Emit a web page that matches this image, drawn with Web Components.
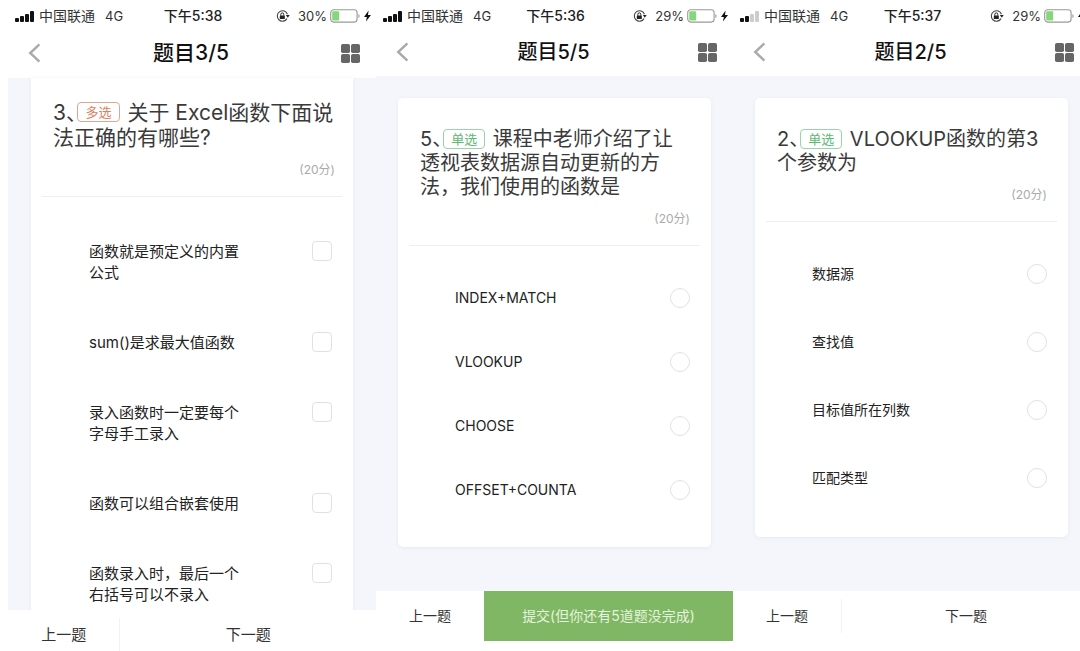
<!DOCTYPE html>
<html lang="zh-CN">
<head>
<meta charset="utf-8">
<meta name="viewport" content="width=device-width, initial-scale=1">
<title>题目</title>
<style>
  html, body { margin: 0; background: #fff; }
  body {
    font-family: Inter, "Noto Sans CJK SC", sans-serif;
    color: #333;
    height: 100vh;
    overflow: hidden;
  }
</style>
</head>
<body>

<quiz-board>
  <quiz-phone class="large">
    <status-bar slot="status" time="下午5:38" charge="30" signal="4"></status-bar>
    <nav-bar slot="nav">题目3/5</nav-bar>
    <quiz-card class="scrolled" number="3" kind="多选">
      <span slot="question">关于 Excel函数下面说法正确的有哪些?</span>
      <quiz-option type="checkbox">函数就是预定义的内置公式</quiz-option>
      <quiz-option type="checkbox">sum()是求最大值函数</quiz-option>
      <quiz-option type="checkbox">录入函数时一定要每个字母手工录入</quiz-option>
      <quiz-option type="checkbox">函数可以组合嵌套使用</quiz-option>
      <quiz-option type="checkbox">函数录入时，最后一个右括号可以不录入</quiz-option>
    </quiz-card>
    <pager-bar slot="pager">下一题</pager-bar>
  </quiz-phone>

  <quiz-phone>
    <status-bar slot="status" time="下午5:36" charge="29" signal="4"></status-bar>
    <nav-bar slot="nav">题目5/5</nav-bar>
    <quiz-card number="5" kind="单选">
      <span slot="question">课程中老师介绍了让透视表数据源自动更新的方法，我们使用的函数是</span>
      <quiz-option type="radio">INDEX+MATCH</quiz-option>
      <quiz-option type="radio">VLOOKUP</quiz-option>
      <quiz-option type="radio">CHOOSE</quiz-option>
      <quiz-option type="radio">OFFSET+COUNTA</quiz-option>
    </quiz-card>
    <pager-bar slot="pager" submit>提交(但你还有5道题没完成)</pager-bar>
  </quiz-phone>

  <quiz-phone>
    <status-bar slot="status" time="下午5:37" charge="29" signal="2"></status-bar>
    <nav-bar slot="nav">题目2/5</nav-bar>
    <quiz-card class="roomy" number="2" kind="单选">
      <span slot="question">VLOOKUP函数的第3个参数为</span>
      <quiz-option type="radio">数据源</quiz-option>
      <quiz-option type="radio">查找值</quiz-option>
      <quiz-option type="radio">目标值所在列数</quiz-option>
      <quiz-option type="radio">匹配类型</quiz-option>
    </quiz-card>
    <pager-bar slot="pager">下一题</pager-bar>
  </quiz-phone>
</quiz-board>

<script>
  const define = (name, html, setup) => {
    const template = document.createElement('template');
    template.innerHTML = html;
    customElements.define(name, class extends HTMLElement {
      constructor() {
        super();
        this.attachShadow({ mode: 'open' }).append(template.content.cloneNode(true));
      }
      connectedCallback() {
        if (setup) setup(this, this.shadowRoot);
      }
    });
  };

  define('quiz-board', `
    <style>
      /* the last screen runs a little past the right edge of the window */
      :host {
        display: grid;
        grid-template-columns: 368fr 357fr 357fr;
        align-items: start;
        margin: 0 -10px 0 8px;
      }
    </style>
    <slot></slot>`);

  define('quiz-phone', `
    <style>
      :host {
        --title: 20px; --question: 20px; --question-line: 24px;
        --option: 14px; --option-line: 20px; --header: 40px;
        display: flex; flex-direction: column; min-width: 0;
      }
      :host(.large) {
        --title: 21px; --question: 21px; --question-line: 25px;
        --option: 15px; --option-line: 21px; --header: 42px;
      }
      main {
        background: #f4f6fb; box-sizing: border-box;
        min-height: 515px; padding: 22px 22px 44px;
      }
      :host(.large) main { padding: 0 23px; }
    </style>
    <slot name="status"></slot>
    <slot name="nav"></slot>
    <main><slot></slot></main>
    <slot name="pager"></slot>`);

  define('status-bar', `
    <style>
      :host {
        display: grid; grid-template-columns: 1fr auto 1fr; align-items: center;
        height: 32px; padding: 0 5px 0 7px;
        font-size: 14px; line-height: 20px; color: #333; white-space: nowrap;
      }
      div { display: flex; align-items: center; }
      .right { justify-content: flex-end; }
      .signal { margin-right: 4px; }
      .net { margin-left: 10px; }
      .net, .charge { font-size: 13px; }
      .time { font-size: 14px; font-weight: 500; color: #222; }
      .lock { margin-right: 8px; }
      .battery { margin: 0 4px 0 3px; }
      svg { flex: none; }
    </style>
    <div>
      <svg class="signal" width="20" height="11" viewBox="0 0 20 11" fill="#111">
        <rect x="0" y="7" width="4" height="4" rx="1"/>
        <rect x="5" y="5" width="4" height="6" rx="1"/>
        <rect x="10" y="3" width="4" height="8" rx="1"/>
        <rect x="15" y="0" width="4" height="11" rx="1"/>
      </svg>
      <span>中国联通</span><span class="net">4G</span>
    </div>
    <span class="time"></span>
    <div class="right">
      <svg class="lock" width="14" height="14" viewBox="0 0 14 14">
        <path d="M11.4 5.2A5.2 5.2 0 1 0 11 9.6" fill="none" stroke="#444" stroke-width="1.1"/>
        <path d="M9.9 6H13.7L11.8 8.8z" fill="#222"/>
        <rect x="3.8" y="6.4" width="5" height="3.6" rx=".5" fill="#222"/>
        <path d="M4.8 6.7V5.4a1.5 1.5 0 0 1 3 0V6.7" fill="none" stroke="#222" stroke-width="1"/>
      </svg>
      <span class="charge"></span>
      <svg class="battery" width="30" height="14" viewBox="0 0 30 14">
        <rect x=".7" y=".7" width="26.4" height="12.4" rx="3" fill="#fff" stroke="#999" stroke-width="1.1"/>
        <rect class="level" x="2.2" y="2.2" height="9.4" rx="1" fill="#86d67c"/>
        <path d="M28.4 5v4q1.2-.6 1.2-2t-1.2-2z" fill="#999"/>
      </svg>
      <svg width="7" height="12" viewBox="0 0 7 12"><path d="M4.6.5 0 6.9h2.9L1.9 11.5 7 5H4z" fill="#111"/></svg>
    </div>`, (host, root) => {
      const charge = host.getAttribute('charge');
      root.querySelector('.time').textContent = host.getAttribute('time');
      root.querySelector('.charge').textContent = charge + '%';
      root.querySelector('.level').setAttribute('width', Math.round(charge * 0.23));
      root.querySelectorAll('.signal rect').forEach((bar, i) => {
        if (i >= +host.getAttribute('signal')) bar.setAttribute('fill', '#ccc');
      });
    });

  define('nav-bar', `
    <style>
      :host {
        display: flex; align-items: center; justify-content: space-between;
        height: var(--header); padding: 0 16px 4px 20px;
      }
      h1 { margin: 0; font-size: var(--title); line-height: 28px; font-weight: 500; color: #111; }
      button { all: unset; display: flex; cursor: pointer; }
    </style>
    <button type="button" aria-label="返回">
      <svg width="13" height="20" viewBox="0 0 13 20"><path d="M11.4 1.4 2.2 10l9.2 8.6" fill="none" stroke="#aaa" stroke-width="2.4"/></svg>
    </button>
    <h1><slot></slot></h1>
    <button type="button" aria-label="答题卡">
      <svg width="19" height="19" viewBox="0 0 19 19" fill="#666">
        <rect width="9" height="9" rx="1.8"/><rect x="10" width="9" height="9" rx="1.8"/>
        <rect y="10" width="9" height="9" rx="1.8"/><rect x="10" y="10" width="9" height="9" rx="1.8"/>
      </svg>
    </button>`);

  define('quiz-card', `
    <style>
      :host {
        --list-top: 42px; --list-gap: 44px; --list-bottom: 47px;
        --card-top: 29px; --card-right: 10px;
        --badge: #5cb873; --badge-line: #9dd3a8;
        display: block; background: #fff; border-radius: 5px;
        box-shadow: 0 1px 4px #e6e9f2;
      }
      :host(.roomy) { --list-gap: 48px; --list-bottom: 49px; }
      :host(.scrolled) {
        --list-top: 44px; --list-gap: 49px; --list-bottom: 5px;
        --card-top: 22px; --card-right: 7px;
        border-radius: 0;
      }
      :host([kind="多选"]) { --badge: #d9825f; --badge-line: #dfa78f; }
      header {
        margin: 0 11px; padding: var(--card-top) var(--card-right) 18px 11px;
        border-bottom: 1px solid #eee;
      }
      h2 {
        margin: 0; font-size: var(--question); line-height: var(--question-line);
        font-weight: 400; color: #3a3a3a;
      }
      .number { font-feature-settings: "halt"; }
      .badge {
        display: inline-block; box-sizing: border-box; vertical-align: middle;
        height: 20px; margin: -4px 2px 0 1px; padding: 0 7px;
        border: 1px solid var(--badge-line); border-radius: 4px;
        font-size: 13px; line-height: 18px; color: var(--badge);
      }
      p {
        margin: 12px 0 0; text-align: right;
        font-size: 12px; line-height: 16px; color: #aaa;
      }
      .list {
        display: grid; gap: var(--list-gap);
        padding: var(--list-top) 21px var(--list-bottom) 57px;
      }
      :host(.scrolled) .list { padding-left: 58px; }
    </style>
    <header>
      <h2><span class="number"></span><span class="badge"></span> <slot name="question"></slot></h2>
      <p>(20分)</p>
    </header>
    <div class="list" role="group"><slot></slot></div>`, (host, root) => {
      root.querySelector('.number').textContent = host.getAttribute('number') + '、';
      root.querySelector('.badge').textContent = host.getAttribute('kind');
      host.addEventListener('pick', (event) => {
        for (const option of host.querySelectorAll('quiz-option[type="radio"]')) {
          if (option !== event.target) option.shadowRoot.querySelector('input').checked = false;
        }
      });
    });

  define('quiz-option', `
    <style>
      :host { display: block; }
      label {
        display: flex; justify-content: space-between; align-items: flex-start;
        font-size: var(--option); line-height: var(--option-line); color: #222; cursor: pointer;
      }
      span { max-width: 155px; }
      input {
        appearance: none; flex: none; box-sizing: border-box;
        width: 20px; height: 20px; margin: 0;
        border: 1px solid #e0e0ea; border-radius: 4px; background: #fff;
      }
      input[type="radio"] { border-radius: 50%; }
      input:checked { background: #80b765; border-color: #80b765; }
    </style>
    <label><span><slot></slot></span><input></label>`, (host, root) => {
      const input = root.querySelector('input');
      input.type = host.getAttribute('type');
      input.addEventListener('change', () => host.dispatchEvent(new Event('pick', { bubbles: true })));
    });

  define('pager-bar', `
    <style>
      :host {
        display: grid; grid-template-columns: 108fr 249fr;
        height: 50px; background: #fff;
      }
      button {
        appearance: none; border: 0; margin: 0; padding: 0 0 3px; background: none;
        font: inherit; font-size: var(--option); color: #333; cursor: pointer;
      }
      .next { border-left: 1px solid #f2f2f4; margin: 8px 0; }
      :host([submit]) .next {
        margin: 0; border: 0; background: #80b765; color: #e4f3dc;
      }
    </style>
    <button type="button">上一题</button>
    <button type="button" class="next"><slot></slot></button>`);
</script>
</body>
</html>
